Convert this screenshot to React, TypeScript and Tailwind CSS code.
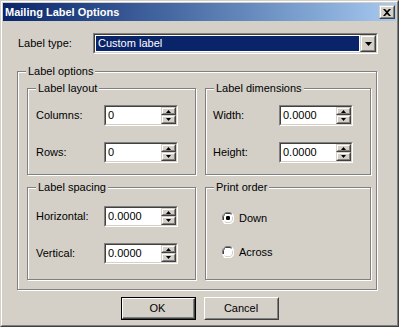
import React from 'react';

const face = 'bg-[#d4d0c8]';

// sunken 2px bevel (edit boxes, combo)
const Sunken = ({ className, children }: { className: string; children: React.ReactNode }) => (
  <div className={`border border-t-[#808080] border-l-[#808080] border-b-white border-r-white ${className}`}>
    <div className="flex h-full w-full border border-t-[#404040] border-l-[#404040] border-b-[#d4d0c8] border-r-[#d4d0c8] bg-white">
      {children}
    </div>
  </div>
);

// raised 2px bevel (small buttons)
const Raised = ({ className, children }: { className: string; children?: React.ReactNode }) => (
  <div className={`border border-t-[#d4d0c8] border-l-[#d4d0c8] border-b-[#404040] border-r-[#404040] ${className}`}>
    <div className={`flex h-full w-full items-center justify-center border border-t-white border-l-white border-b-[#808080] border-r-[#808080] ${face}`}>
      {children}
    </div>
  </div>
);

const Arrow = ({ up, w = 5 }: { up?: boolean; w?: number }) => {
  const h = Math.ceil(w / 2);
  return (
    <svg width={w} height={h} viewBox={`0 0 ${w} ${h}`} className="block">
      <polygon points={up ? `0,${h} ${w},${h} ${w / 2},0` : `0,0 ${w},0 ${w / 2},${h}`} fill="#000" />
    </svg>
  );
};

const SpinEdit = ({ value }: { value: string }) => (
  <Sunken className="h-[21px] w-[74px]">
    <div className="flex-1 pl-[2px] pt-[1px] leading-[14px] text-black">{value}</div>
    <div className="flex w-[15px] flex-col">
      <Raised className="h-[8px] w-full">
        <Arrow up />
      </Raised>
      <Raised className="h-[9px] w-full">
        <Arrow />
      </Raised>
    </div>
  </Sunken>
);

const Group = ({ title, className, children }: { title: string; className: string; children?: React.ReactNode }) => (
  <div className={`relative border border-[#808080] shadow-[inset_1px_1px_0_#fff,1px_1px_0_#fff] ${className}`}>
    <span className={`absolute left-[8px] top-[-8px] px-[2px] leading-[14px] ${face}`}>{title}</span>
    {children}
  </div>
);

const EditRow = ({ label, value, labelW }: { label: string; value: string; labelW: string }) => (
  <div className="flex items-center">
    <span className={labelW}>{label}</span>
    <SpinEdit value={value} />
  </div>
);

const Radio = ({ label, checked }: { label: string; checked?: boolean }) => (
  <div className="flex h-[14px] items-center gap-[5px]">
    <svg width="12" height="12" viewBox="0 0 12 12" className="block">
      <path d="M4 0h4l2 1 1 1 1 2v4l-1 2-1 1-2 1H4L2 11 1 10 0 8V4l1-2 1-1z" fill="#fff" />
      <path d="M0.5 8V4l1-2 0.5-0.5 2-1h4l2 1" stroke="#808080" fill="none" />
      <path d="M1.5 8V4.5l1-2 1-1h4.5l1.5 0.8" stroke="#404040" fill="none" />
      <path d="M11.5 4v4l-1 2-1 1-2 1h-4l-2-1" stroke="#fff" fill="none" />
      <path d="M10.5 4.5V8l-1 1.5-1.5 1h-4l-1.5-0.8" stroke="#d4d0c8" fill="none" />
      {checked && <rect x="4" y="4" width="4" height="4" rx="1.2" fill="#000" />}
    </svg>
    <span>{label}</span>
  </div>
);

const Button = ({ label, isDefault }: { label: string; isDefault?: boolean }) =>
  isDefault ? (
    <div className="h-[23px] w-[75px] border border-black">
      <div className="h-full w-full border border-t-white border-l-white border-b-[#404040] border-r-[#404040]">
        <div className={`flex h-full w-full items-center justify-center border-b border-r border-[#808080] ${face}`}>{label}</div>
      </div>
    </div>
  ) : (
    <div className="h-[23px] w-[75px] border border-t-white border-l-white border-b-[#404040] border-r-[#404040]">
      <div className={`flex h-full w-full items-center justify-center border border-t-[#d4d0c8] border-l-[#d4d0c8] border-b-[#808080] border-r-[#808080] ${face}`}>{label}</div>
    </div>
  );

export default function App() {
  return (
    <div className="font-['Liberation_Sans',Arial,sans-serif] text-[11px] text-black">
      <div className="h-[327px] w-[399px] border border-t-[#d4d0c8] border-l-[#d4d0c8] border-b-[#404040] border-r-[#404040]">
        <div className={`h-full w-full border border-t-white border-l-white border-b-[#808080] border-r-[#808080] p-[1px] ${face}`}>
          {/* Title bar */}
          <div className="flex h-[18px] items-center justify-between bg-gradient-to-r from-[#0a246a] to-[#a6caf0] pl-[2px] pr-[1px]">
            <span className="font-bold text-white">Mailing Label Options</span>
            <Raised className="h-[14px] w-[16px]">
              <svg width="8" height="7" viewBox="0 0 8 7" className="block">
                <path d="M0 0h2l2 2 2-2h2L5 3.5 8 7H6L4 5 2 7H0l3-3.5z" fill="#000" />
              </svg>
            </Raised>
          </div>

          {/* Label type */}
          <div className="mt-[12px] flex items-center pl-[15px]">
            <span className="w-[75px]">Label type:</span>
            <Sunken className="h-[21px] w-[285px]">
              <div className="flex-1 p-[1px]">
                <div className="h-full bg-[#0a246a] pl-[2px] leading-[15px] text-white">Custom label</div>
              </div>
              <Raised className="h-[17px] w-[16px]">
                <Arrow w={7} />
              </Raised>
            </Sunken>
          </div>

          {/* Label options */}
          <Group title="Label options" className="ml-[14px] mt-[17px] h-[219px] w-[360px]">
            <div className="grid grid-cols-[169px_166px] grid-rows-[87px_93px] gap-x-[9px] gap-y-[12px] pl-[9px] pt-[16px]">
              <Group title="Label layout" className="">
                <div className="flex flex-col gap-[16px] pl-[8px] pt-[16px]">
                  <EditRow label="Columns:" value="0" labelW="w-[68px]" />
                  <EditRow label="Rows:" value="0" labelW="w-[68px]" />
                </div>
              </Group>
              <Group title="Label dimensions" className="">
                <div className="flex flex-col gap-[16px] pl-[7px] pt-[16px]">
                  <EditRow label="Width:" value="0.0000" labelW="w-[66px]" />
                  <EditRow label="Height:" value="0.0000" labelW="w-[66px]" />
                </div>
              </Group>
              <Group title="Label spacing" className="">
                <div className="flex flex-col gap-[16px] pl-[8px] pt-[18px]">
                  <EditRow label="Horizontal:" value="0.0000" labelW="w-[68px]" />
                  <EditRow label="Vertical:" value="0.0000" labelW="w-[68px]" />
                </div>
              </Group>
              <Group title="Print order" className="">
                <div className="flex flex-col gap-[20px] pl-[16px] pt-[23px]">
                  <Radio label="Down" checked />
                  <Radio label="Across" />
                </div>
              </Group>
            </div>
          </Group>

          {/* Buttons */}
          <div className="mt-[7px] flex justify-center gap-[8px]">
            <Button label="OK" isDefault />
            <Button label="Cancel" />
          </div>
        </div>
      </div>
    </div>
  );
}
